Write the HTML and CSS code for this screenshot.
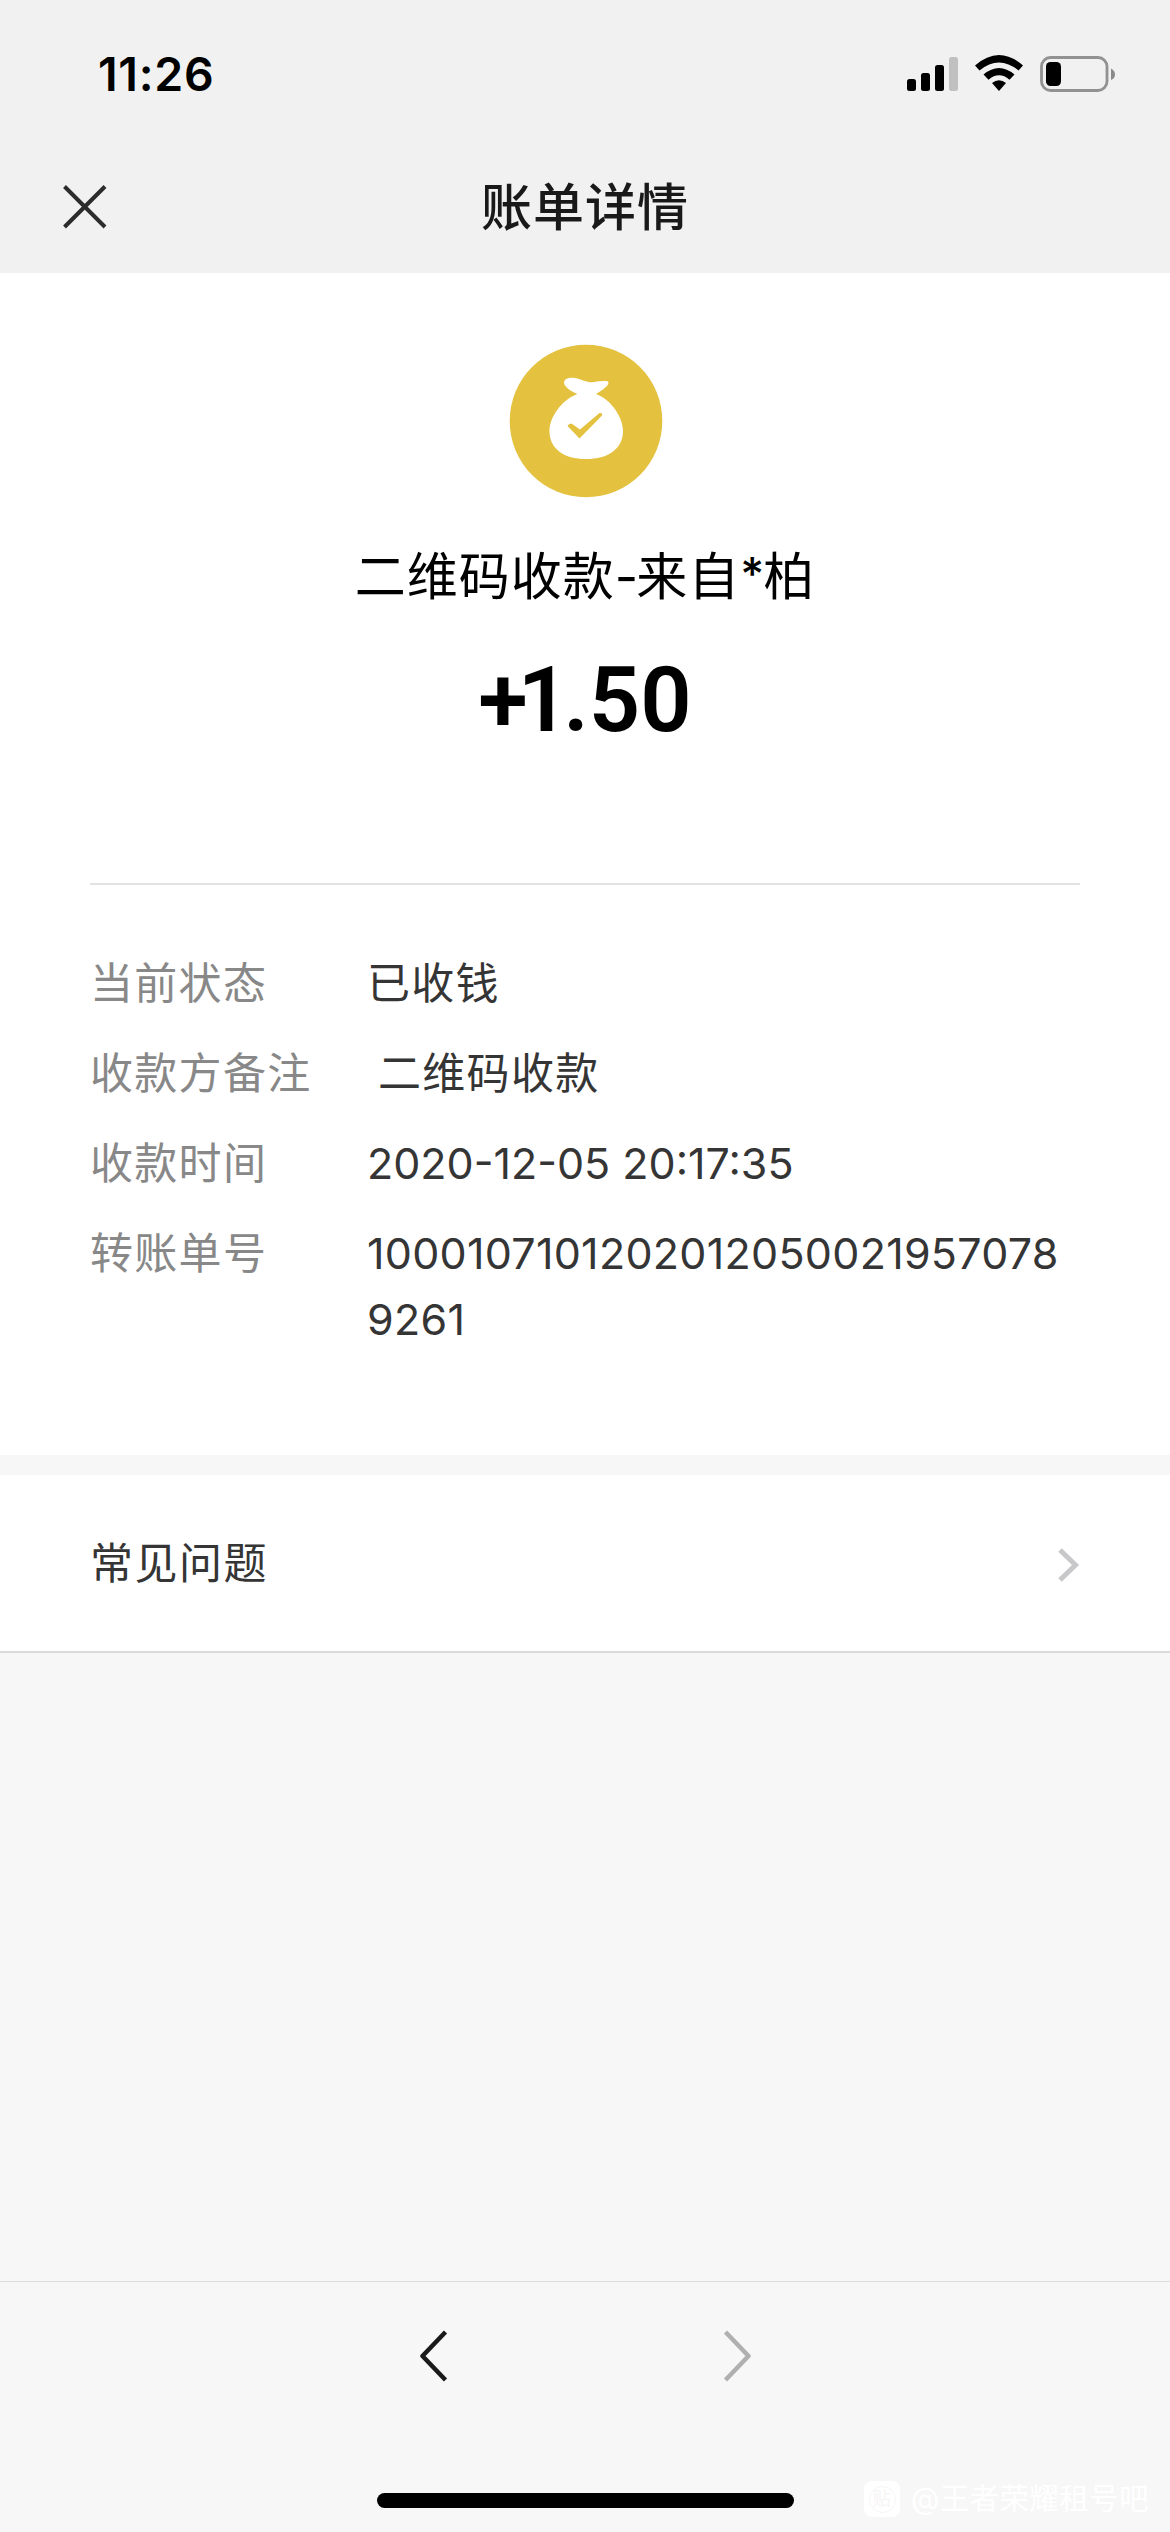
FILE: index.html
```html
<!DOCTYPE html>
<html lang="zh-CN">
<head>
<meta charset="utf-8">
<title>账单详情</title>
<link rel="stylesheet" href="styles.css">
</head>
<body>
<div class="screen">
  <header class="top">
    <div class="status">
      <span class="time">11:26</span>
      <svg class="status-icons" width="210" height="40" viewBox="906 54 210 40">
        <rect x="907" y="79" width="9" height="12" rx="2.5"/>
        <rect x="921" y="73" width="9" height="18" rx="2.5"/>
        <rect x="935" y="65" width="9" height="26" rx="2.5"/>
        <rect x="949" y="57" width="9" height="34" rx="2.5" fill="#c0c0c0"/>
        <path d="M975 65.5Q999 44.500 1023 65.500L1018.500 70.500Q999 54.500 979.500 70.500Z"/>
        <path d="M983.500 74.500Q999 61.500 1014.500 74.500L1009.500 79.700Q999 71 988.500 79.700Z"/>
        <path d="M992 83Q999 77.500 1006 83L999 91Z"/>
        <rect x="1041.500" y="57.500" width="65.500" height="33" rx="9" fill="none" stroke="#929292" stroke-width="2.800"/>
        <rect x="1046" y="62" width="15" height="24" rx="4.500"/>
        <path d="M1111 68.500Q1115 70.500 1115 74.500T1111 80Z" fill="#8a8a8a"/>
      </svg>
    </div>
    <div class="navbar">
      <svg class="close" width="44" height="44" viewBox="0 0 44 44"><path d="M1.500 1.500L42 42M42 1.500L1.500 42"/></svg>
      <h1 class="title">账单详情</h1>
    </div>
  </header>
  <main class="bill">
    <section class="summary">
      <svg class="badge" width="154" height="154" viewBox="0 0 154 154">
        <circle cx="77" cy="77" r="76.300" fill="#e4c240"/>
        <path fill="#fff" d="M68.500 50Q60 47 56 41.500C52.500 35 60 33 66 34C74 35.500 79 39.500 85 38Q92 36.500 97.500 37C102 38 98 42.500 94 45.500L87 50C103 56 114 74 114 87C114 105 99 115 77 115C55 115 40.500 105 40.500 87C40.500 74 52 56 68.500 50Z"/>
        <path fill="#e4c240" d="M62.500 79.500Q59.500 79.500 58.500 82L70.500 94.500L93 71.500Q94 68.500 90.500 69L71 85.500Z"/>
      </svg>
      <p class="name">二维码收款<span class="dash">-</span>来自<span class="star">*</span>柏</p>
      <p class="amount"><span class="plus">+</span><span class="one">1</span><span class="point">.</span>50</p>
    </section>
    <dl class="details">
      <div class="row"><dt>当前状态</dt><dd>已收钱</dd></div>
      <div class="row"><dt>收款方备注</dt><dd class="remark">二维码收款</dd></div>
      <div class="row"><dt>收款时间</dt><dd class="date">2020-12-05 20:17:35</dd></div>
      <div class="row"><dt>转账单号</dt><dd class="number">1000107101202012050021957078<wbr>9261</dd></div>
    </dl>
  </main>
  <a class="faq">
    <span class="faq-label">常见问题</span>
    <svg class="faq-arrow" width="22" height="34" viewBox="0 0 22 34"><path d="M2 2L17.500 17L2 32" fill="none" stroke="#c8c8cb" stroke-width="5"/></svg>
  </a>
  <footer class="toolbar">
    <div class="arrows">
      <svg width="28" height="52" viewBox="0 0 28 52"><path d="M25.500 2L2.500 26L25.500 50" stroke="#1a1a1a"/></svg>
      <svg width="28" height="52" viewBox="0 0 28 52"><path d="M2.500 2L25.500 26L2.500 50" stroke="#b0b0b0"/></svg>
    </div>
    <div class="home"></div>
  </footer>
  <div class="watermark">
    <span class="logo"><span class="bubble">贴</span></span>
    <span>@王者荣耀租号吧</span>
  </div>
</div>
</body>
</html>
```
FILE: styles.css
```css
* { box-sizing: border-box; margin: 0; padding: 0; }
body { background: #f7f7f7; }
.screen {
  position: relative;
  display: flex;
  flex-direction: column;
  width: 1170px;
  height: 2532px;
  overflow: hidden;
  background: #f7f7f7;
  font-family: Inter, "Noto Sans CJK SC", sans-serif;
  color: #353535;
}
.top { height: 273px; background: #f1f1f1; }
.status {
  display: flex;
  justify-content: space-between;
  height: 141px;
  padding: 54px 54px 0 98px;
}
.time { font-size: 46.500px; font-weight: 600; letter-spacing: 0.700px; line-height: 40px; color: #000; }
.navbar {
  display: grid;
  grid-template-columns: 44px 1fr 44px;
  align-items: center;
  height: 132px;
  padding: 0 63px;
}
.close { fill: none; stroke: #2c2c2c; stroke-width: 4; }
.title {
  padding-top: 2px;
  text-align: center;
  font-size: 51px;
  font-weight: 500;
  letter-spacing: 1px;
  line-height: 60px;
  color: #191919;
}
.bill { height: 1182px; background: #fff; }
.summary {
  display: flex;
  flex-direction: column;
  align-items: center;
  height: 610px;
  padding-top: 71px;
}
.badge { margin-left: 1px; }
.name {
  height: 60px;
  margin-top: 49px;
  font-size: 51px;
  letter-spacing: 1px;
  line-height: 60px;
  color: #000;
}
.dash { letter-spacing: -2px; }
.star { font-size: 46px; font-weight: 500; letter-spacing: -1px; line-height: 1; vertical-align: 4px; }
.amount {
  margin-top: 49px;
  font-family: Roboto, sans-serif;
  font-size: 90px;
  font-weight: 600;
  line-height: 90px;
  color: #000;
}
.plus { letter-spacing: -10px; }
.one { letter-spacing: -6px; }
.point { letter-spacing: 0; }
.details {
  display: flex;
  flex-direction: column;
  gap: 24px;
  margin: 0 90px;
  padding-top: 65px;
  border-top: 2px solid #e2e2e2;
}
.row {
  display: grid;
  grid-template-columns: 277px 1fr;
  font-size: 43px;
  line-height: 66px;
}
dt { padding-top: 1px; color: #888; letter-spacing: 1.300px; line-height: 65px; }
dd { letter-spacing: 1.300px; }
.remark { padding-left: 11px; }
.date { letter-spacing: 0; }
.number { letter-spacing: 0.280px; }
.faq {
  display: flex;
  align-items: center;
  justify-content: space-between;
  height: 178px;
  margin-top: 20px;
  padding: 0 90px;
  border-bottom: 2px solid #dadada;
  background: #fff;
  font-size: 43px;
  letter-spacing: 1.500px;
}
.faq-label { padding-bottom: 6px; }
.faq-arrow { margin-top: 3px; }
.toolbar {
  display: flex;
  flex-direction: column;
  align-items: center;
  justify-content: space-between;
  height: 251px;
  margin-top: auto;
  padding: 48px 0 24px;
  border-top: 1px solid #dcdcdc;
}
.arrows { display: flex; gap: 275px; }
.arrows path { fill: none; stroke-width: 4.500; stroke-linejoin: round; }
.home { width: 417px; height: 15px; border-radius: 8px; background: #000; }
.watermark {
  position: absolute;
  left: 864px;
  top: 2479px;
  display: flex;
  align-items: center;
  gap: 11px;
  height: 40px;
  font-size: 29.300px;
  letter-spacing: 0.600px;
  line-height: 40px;
  color: #fff;
  white-space: nowrap;
}
.logo {
  display: grid;
  place-items: center;
  width: 36px;
  height: 36px;
  border-radius: 8px;
  background: #fff;
}
.bubble {
  width: 27px;
  height: 27px;
  border: 1px solid #f5f5f5;
  border-radius: 50%;
  font-size: 18px;
  line-height: 24px;
  text-align: center;
  color: #f5f5f5;
}
```
